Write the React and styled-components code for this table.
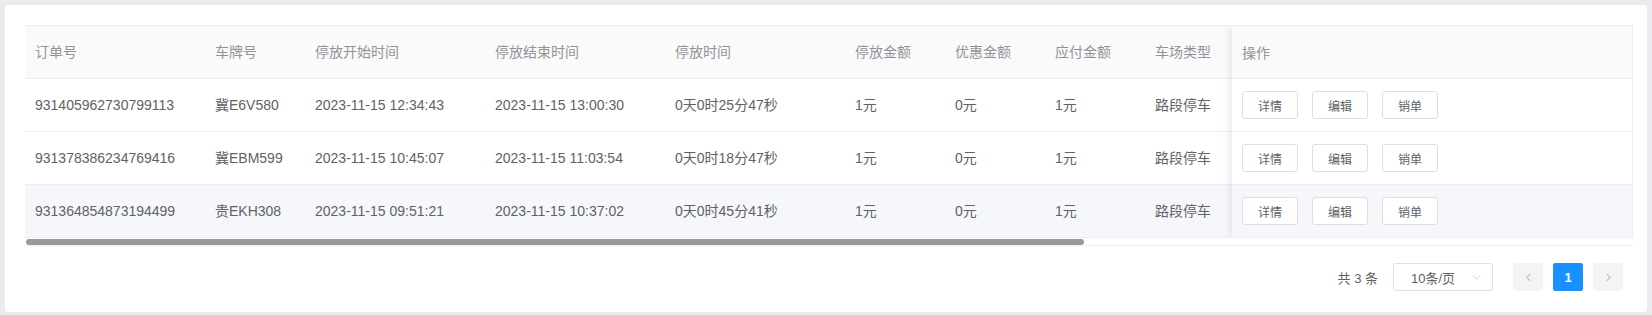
import React, { useLayoutEffect, useRef, useState } from "react";
import styled, { createGlobalStyle } from "styled-components";
import { ChevronLeft, ChevronRight, ChevronDown } from "lucide-react";

const GlobalStyle = createGlobalStyle`
  html, body {
    margin: 0;
    padding: 0;
    background: #e9ebef;
  }
  body {
    font-family: "Liberation Sans", "Noto Sans CJK SC", sans-serif;
    color: #606266;
  }
  * { box-sizing: border-box; }
`;

const columns = [
  { key: "orderNo", title: "订单号", width: 180 },
  { key: "plate", title: "车牌号", width: 100 },
  { key: "start", title: "停放开始时间", width: 180 },
  { key: "end", title: "停放结束时间", width: 180 },
  { key: "duration", title: "停放时间", width: 180 },
  { key: "amount", title: "停放金额", width: 100 },
  { key: "discount", title: "优惠金额", width: 100 },
  { key: "payable", title: "应付金额", width: 100 },
  { key: "lotType", title: "车场类型", width: 100 },
  { key: "lotName", title: "车场名称", width: 200 },
  { key: "payWay", title: "支付方式", width: 120 },
  { key: "payState", title: "支付状态", width: 120 },
  { key: "payTime", title: "支付时间", width: 180 },
  { key: "remark", title: "备注", width: 204 },
];

const rows = [
  {
    orderNo: "931405962730799113",
    plate: "冀E6V580",
    start: "2023-11-15 12:34:43",
    end: "2023-11-15 13:00:30",
    duration: "0天0时25分47秒",
    amount: "1元",
    discount: "0元",
    payable: "1元",
    lotType: "路段停车",
    lotName: "建设大街路段",
    payWay: "微信",
    payState: "已支付",
    payTime: "2023-11-15 13:00:41",
    remark: "",
  },
  {
    orderNo: "931378386234769416",
    plate: "冀EBM599",
    start: "2023-11-15 10:45:07",
    end: "2023-11-15 11:03:54",
    duration: "0天0时18分47秒",
    amount: "1元",
    discount: "0元",
    payable: "1元",
    lotType: "路段停车",
    lotName: "建设大街路段",
    payWay: "微信",
    payState: "已支付",
    payTime: "2023-11-15 11:04:12",
    remark: "",
  },
  {
    orderNo: "931364854873194499",
    plate: "贵EKH308",
    start: "2023-11-15 09:51:21",
    end: "2023-11-15 10:37:02",
    duration: "0天0时45分41秒",
    amount: "1元",
    discount: "0元",
    payable: "1元",
    lotType: "路段停车",
    lotName: "建设大街路段",
    payWay: "支付宝",
    payState: "已支付",
    payTime: "2023-11-15 10:37:20",
    remark: "",
  },
];

const HIGHLIGHT_ROW = 2;

const App = () => {
  const scrollRef = useRef(null);
  const [thumb, setThumb] = useState({ width: 0, left: 0 });

  // the native bar is hidden, so size our own thumb from the scroller
  useLayoutEffect(() => {
    const el = scrollRef.current;
    if (!el) return;
    const update = () => {
      const ratio = el.clientWidth / el.scrollWidth;
      setThumb({
        width: Math.round(el.clientWidth * ratio),
        left: Math.round(el.scrollLeft * ratio),
      });
    };
    update();
    el.addEventListener("scroll", update);
    return () => el.removeEventListener("scroll", update);
  }, []);

  return (
    <Page>
      <GlobalStyle />
      <Card>
        <TableWrap>
          <Scroller ref={scrollRef}>
            <Inner>
              <Grid>
                <colgroup>
                  {columns.map((c) => (
                    <col key={c.key} style={{ width: c.width }} />
                  ))}
                </colgroup>
                <thead>
                  <tr>
                    {columns.map((c) => (
                      <Th key={c.key}>{c.title}</Th>
                    ))}
                  </tr>
                </thead>
                <tbody>
                  {rows.map((r, i) => (
                    <Tr key={r.orderNo} highlighted={i === HIGHLIGHT_ROW}>
                      {columns.map((c) => (
                        <Td key={c.key}>{r[c.key]}</Td>
                      ))}
                    </Tr>
                  ))}
                </tbody>
              </Grid>

              <FixedPane>
                <FixedHead>操作</FixedHead>
                {rows.map((r, i) => (
                  <FixedRow key={r.orderNo} highlighted={i === HIGHLIGHT_ROW}>
                    <MiniButton>详情</MiniButton>
                    <MiniButton>编辑</MiniButton>
                    <MiniButton>销单</MiniButton>
                  </FixedRow>
                ))}
              </FixedPane>
            </Inner>
          </Scroller>
          <ScrollTrack>
            <ScrollThumb style={{ width: thumb.width, marginLeft: thumb.left + 1 }} />
          </ScrollTrack>
        </TableWrap>

        <Pagination>
          <Total>共 3 条</Total>
          <SizeSelect>
            <span>10条/页</span>
            <ChevronDown size={13} strokeWidth={1.4} color="#c0c4cc" />
          </SizeSelect>
          <Pager>
            <PageBtn disabled>
              <ChevronLeft size={13} strokeWidth={2} />
            </PageBtn>
            <PageBtn active>1</PageBtn>
            <PageBtn disabled>
              <ChevronRight size={13} strokeWidth={2} />
            </PageBtn>
          </Pager>
        </Pagination>
      </Card>
    </Page>
  );
};

export default App;

const Page = styled.div`
  padding: 5px;
`;

const Card = styled.div`
  background: #fff;
  border-radius: 4px;
  padding: 20px 14px 21px 20px;
`;

const TableWrap = styled.div`
  border-top: 1px solid #ebeef5;
  border-bottom: 1px solid #ebeef5;
`;

const Scroller = styled.div`
  overflow-x: auto;
  overflow-y: hidden;
  scrollbar-width: none;
`;

const ScrollTrack = styled.div`
  height: 7px;
  padding-top: 1px;
  display: flex;
`;

const ScrollThumb = styled.div`
  height: 6px;
  border-radius: 3px;
  background: #999;
`;

const Inner = styled.div`
  display: flex;
  width: max-content;
`;

const Grid = styled.table`
  border-collapse: separate;
  border-spacing: 0;
  table-layout: fixed;
  font-size: 14px;
`;

const Th = styled.th`
  text-align: left;
  font-weight: 400;
  color: #909399;
  background: #fafafa;
  padding: 16px 10px;
  line-height: 20px;
  white-space: nowrap;
  border-bottom: 1px solid #ebeef5;
`;

const Tr = styled.tr`
  background: ${({ highlighted }) => (highlighted ? "#f5f7fa" : "#fff")};
`;

const Td = styled.td`
  padding: 16px 10px;
  line-height: 20px;
  color: #606266;
  white-space: nowrap;
  border-bottom: 1px solid #ebeef5;
`;

const FixedPane = styled.div`
  position: sticky;
  right: 0;
  width: 401px;
  flex-shrink: 0;
  background: #fff;
  border-right: 1px solid #ebeef5;
  box-shadow: 0 0 10px rgba(0, 0, 0, 0.12);
  font-size: 14px;
  align-self: flex-start;
`;

const FixedHead = styled.div`
  height: 53px;
  display: flex;
  align-items: center;
  padding: 0 10px;
  background: #fafafa;
  color: #909399;
  border-bottom: 1px solid #ebeef5;
`;

const FixedRow = styled.div`
  height: 53px;
  display: flex;
  align-items: center;
  gap: 14px;
  padding: 0 10px;
  background: ${({ highlighted }) => (highlighted ? "#f5f7fa" : "#fff")};
  border-bottom: 1px solid #ebeef5;
`;

const MiniButton = styled.button`
  width: 56px;
  height: 28px;
  padding: 0;
  font-family: inherit;
  font-size: 12px;
  color: #606266;
  background: #fff;
  border: 1px solid #dcdfe6;
  border-radius: 3px;
  cursor: pointer;
`;

const Pagination = styled.div`
  margin-top: 17px;
  padding-right: 10px;
  display: flex;
  justify-content: flex-end;
  align-items: center;
  font-size: 13px;
  color: #606266;
`;

const Total = styled.span`
  margin-right: 15px;
`;

const SizeSelect = styled.div`
  width: 100px;
  height: 28px;
  border: 1px solid #dcdfe6;
  border-radius: 3px;
  display: flex;
  align-items: center;
  justify-content: space-between;
  padding: 0 9px 0 17px;
  margin-right: 20px;
  font-size: 13px;
  color: #606266;
`;

const Pager = styled.div`
  display: flex;
  gap: 10px;
`;

const PageBtn = styled.div`
  width: 30px;
  height: 28px;
  border-radius: 2px;
  display: flex;
  align-items: center;
  justify-content: center;
  font-size: 13px;
  font-weight: 700;
  background: ${({ active }) => (active ? "#1890ff" : "#f4f4f5")};
  color: ${({ active, disabled }) =>
    active ? "#fff" : disabled ? "#c0c4cc" : "#606266"};
`;
